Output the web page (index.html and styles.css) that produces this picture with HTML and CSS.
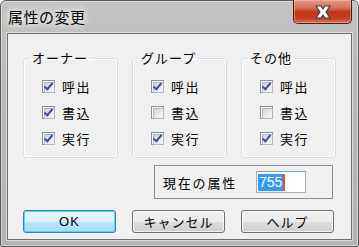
FILE: index.html
```html
<!DOCTYPE html>
<html lang="ja">
<head>
    <meta charset="UTF-8">
    <title>属性の変更</title>
    <link rel="stylesheet" href="styles.css">
</head>
<body>
    <div class="window">
        <div class="titlebar">
            <span class="title">属性の変更</span>
            <div class="close-btn">
                <svg width="20" height="14" viewBox="0 0 20 14">
                    <path d="M3 1 L8 1 L10 4 L12 1 L17 1 L13 7 L17 13 L12 13 L10 10 L8 13 L3 13 L7 7 Z" fill="#fff" stroke="#3c3c3c" stroke-width="1.2" stroke-linejoin="round"/>
                </svg>
            </div>
        </div>

        <div class="client">
            <div class="groups">
                <fieldset class="group">
                    <legend>オーナー</legend>
                    <div class="row"><span class="cb checked"></span>呼出</div>
                    <div class="row"><span class="cb checked"></span>書込</div>
                    <div class="row"><span class="cb checked"></span>実行</div>
                </fieldset>
                <fieldset class="group">
                    <legend>グループ</legend>
                    <div class="row"><span class="cb checked"></span>呼出</div>
                    <div class="row"><span class="cb"></span>書込</div>
                    <div class="row"><span class="cb checked"></span>実行</div>
                </fieldset>
                <fieldset class="group">
                    <legend>その他</legend>
                    <div class="row"><span class="cb checked"></span>呼出</div>
                    <div class="row"><span class="cb"></span>書込</div>
                    <div class="row"><span class="cb checked"></span>実行</div>
                </fieldset>
            </div>

            <div class="attr-row">
                <div class="attr-box">
                    <span class="attr-label">現在の属性</span>
                    <div class="attr-input"><span class="selected">755</span><span class="caret"></span></div>
                </div>
            </div>

            <div class="buttons">
                <button class="btn default">OK</button>
                <button class="btn">キャンセル</button>
                <button class="btn">ヘルプ</button>
            </div>
        </div>
    </div>
</body>
</html>
```

FILE: styles.css
```css
* {
    box-sizing: border-box;
}

body {
    margin: 0;
    background: #ffffff;
    font-family: "Noto Sans CJK JP", "Noto Sans", sans-serif;
    font-size: 13px;
    color: #000;
}

.window {
    width: 359px;
    height: 247px;
    border: 1px solid #5a5a5a;
    border-radius: 6px 6px 2px 2px;
    background: linear-gradient(to bottom, #c4c4c4 0%, #b9b9b9 30%, #b3b3b3 100%);
    box-shadow: inset 0 0 0 1px rgba(255, 255, 255, 0.45);
    display: flex;
    flex-direction: column;
}

/* title bar */
.titlebar {
    height: 32px;
    display: flex;
    justify-content: space-between;
    align-items: flex-start;
}

.title {
    margin: 6px 0 0 7px;
    font-size: 15px;
    line-height: 20px;
    letter-spacing: 0.5px;
    text-shadow: 0 0 6px #fff, 0 0 10px #fff;
}

.close-btn {
    width: 59px;
    height: 24px;
    margin-right: 6px;
    margin-top: -1px;
    border: 1px solid #4a1d14;
    border-top: none;
    border-radius: 0 0 5px 5px;
    background: linear-gradient(to bottom, #e49a88 0%, #d4705a 35%, #c03519 52%, #c53f22 80%, #d8765a 100%);
    box-shadow: inset 0 0 0 1px rgba(255, 200, 180, 0.45);
    display: flex;
    align-items: center;
    justify-content: center;
}

/* client area */
.client {
    margin: 0 6px 6px 6px;
    flex: 1;
    border: 1px solid #6e6e6e;
    background: #f0f0f0;
    box-shadow: 0 0 0 1px rgba(255, 255, 255, 0.5);
    padding: 16px 0 0 15px;
}

.groups {
    display: flex;
    gap: 14px;
}

.group {
    width: 95px;
    height: 108px;
    margin: 0;
    padding: 0;
    border: 1px solid #d5dfe5;
    border-radius: 3px;
    box-shadow: inset 0 0 0 1px #fff;
}

.group legend {
    margin-left: 6px;
    padding: 0 2px;
    line-height: 16px;
    letter-spacing: 1px;
}

.row {
    display: flex;
    align-items: center;
    height: 13px;
    margin: 13px 0 0 18px;
    letter-spacing: 1.5px;
    line-height: 13px;
}

.row:first-of-type {
    margin-top: 14px;
}

/* checkboxes */
.cb {
    width: 13px;
    height: 13px;
    margin-right: 7px;
    border: 1px solid #8e8f8f;
    background: #fff;
    position: relative;
    flex-shrink: 0;
}

.cb::before {
    content: "";
    position: absolute;
    left: 1px;
    top: 1px;
    width: 9px;
    height: 9px;
    border: 1px solid #b4b8bd;
    background: linear-gradient(135deg, #d0d3d8 0%, #ebecee 60%, #f7f7f7 100%);
}

.cb.checked::after {
    content: "";
    position: absolute;
    left: 3px;
    top: 0px;
    width: 3px;
    height: 7px;
    border-right: 2px solid #3b50a0;
    border-bottom: 2px solid #3b50a0;
    transform: rotate(40deg);
}

/* current attribute */
.attr-row {
    display: flex;
    justify-content: flex-end;
    padding-right: 18px;
    margin-top: 7px;
}

.attr-box {
    width: 179px;
    height: 34px;
    border: 1px solid #8a8a8a;
    display: flex;
    align-items: center;
    padding-left: 8px;
}

.attr-label {
    width: 93px;
    letter-spacing: 1.8px;
}

.attr-input {
    width: 50px;
    height: 22px;
    background: #fff;
    border: 1px solid #abadb3;
    border-top-color: #7da2ce;
    display: flex;
    align-items: center;
    padding-left: 1px;
    font-family: "Liberation Sans", sans-serif;
    font-size: 14px;
}

.selected {
    background: #3399ff;
    color: #fff;
    line-height: 17px;
    padding: 0 1px;
}

.caret {
    width: 2px;
    height: 17px;
    background: #d35b1d;
}

/* buttons */
.buttons {
    display: flex;
    gap: 16px;
    margin-top: 11px;
}

.btn {
    width: 93px;
    height: 23px;
    padding: 0;
    border: 1px solid #707070;
    border-radius: 3px;
    background: linear-gradient(to bottom, #f2f2f2 0%, #ebebeb 50%, #dddddd 51%, #cfcfcf 100%);
    box-shadow: inset 0 0 0 1px rgba(255, 255, 255, 0.7);
    font-family: "Noto Sans CJK JP", sans-serif;
    font-size: 13px;
    letter-spacing: 1px;
    color: #000;
}

.btn.default {
    border-color: #3c7fb1;
    background: linear-gradient(to bottom, #eaf6fd 0%, #d9f0fc 50%, #bee6fd 51%, #a7d9f5 100%);
    box-shadow: inset 0 0 0 1px #48dbfa;
    font-family: "Liberation Sans", sans-serif;
}
```
